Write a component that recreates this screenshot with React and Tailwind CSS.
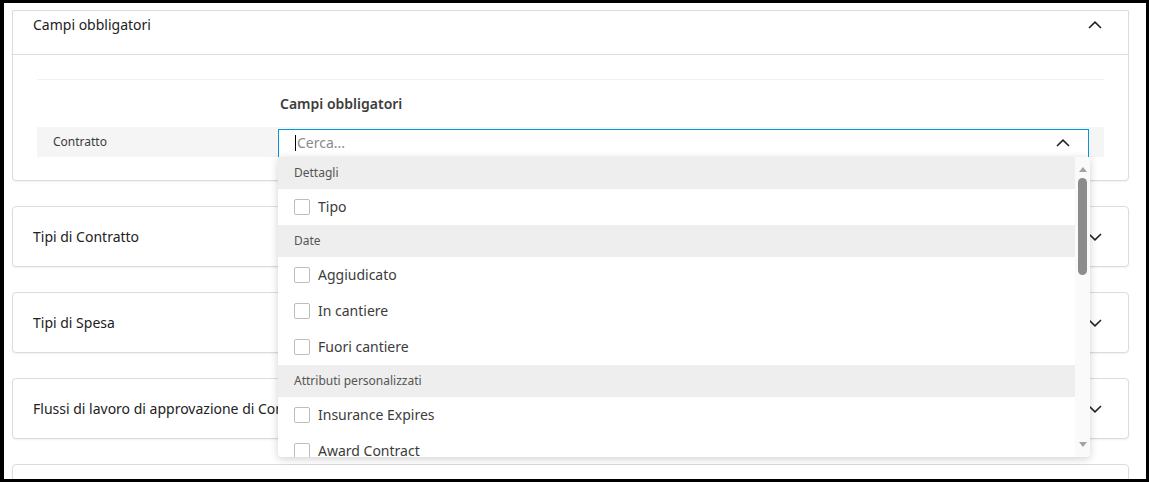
const font = { fontFamily: '"Noto Sans", "Open Sans", sans-serif' };

const ChevronUp = () => (
  <svg width="14" height="8" viewBox="0 0 14 8" fill="none">
    <polyline points="1,7 7,1.2 13,7" stroke="#222" strokeWidth="1.6" />
  </svg>
);

const ChevronDown = () => (
  <svg width="14" height="8" viewBox="0 0 14 8" fill="none">
    <polyline points="1,1 7,6.8 13,1" stroke="#222" strokeWidth="1.6" />
  </svg>
);

const GroupHeader = ({ label }) => (
  <div className="h-8 shrink-0 flex items-center pl-4 bg-[#eeeeee] text-xs text-[#555]">{label}</div>
);

const Option = ({ label }) => (
  <div className="h-9 shrink-0 flex items-center pl-4 gap-2 text-sm text-[#3c3c3c]">
    <span className="w-4 h-4 border border-[#bdbdbd] rounded-[2px] bg-white" />
    {label}
  </div>
);

const Card = ({ title }) => (
  <div className="h-[61px] shrink-0 border border-[#dcdcdc] rounded shadow-[0_1px_2px_rgba(0,0,0,0.06)] flex items-center justify-between pl-5 pr-[26px] text-sm text-[#222] bg-white">
    <span className="whitespace-nowrap">{title}</span>
    <ChevronDown />
  </div>
);

export default function App() {
  return (
    <div
      className="w-[1149px] h-[482px] overflow-hidden bg-white border-black border-t-[3px] border-r-[3px] border-b-[3px] border-l-4"
      style={font}
    >
      <div className="pl-2 pr-[17px] pt-[7px] flex flex-col gap-[25px]">
        <div className="shrink-0 border border-[#dcdcdc] rounded-b shadow-[0_1px_2px_rgba(0,0,0,0.06)] bg-white">
          <div className="h-[44px] flex items-center justify-between pl-5 pr-[26px] border-b border-[#dcdcdc] text-sm text-[#222]">
            <span className="-mt-[16px]">Campi obbligatori</span>
            <span className="-mt-[16px]">
              <ChevronUp />
            </span>
          </div>
          <div className="p-6 pb-[23px]">
            <div className="border-t border-[#f0f0f0] h-[48px] flex items-center pl-[243px] text-sm font-semibold text-[#3c3c3c]">
              Campi obbligatori
            </div>
            <div className="h-[30px] bg-[#f5f5f5] flex pr-[15px]">
              <div className="w-[241px] shrink-0 pl-4 flex items-center text-xs text-[#3c3c3c]">Contratto</div>
              <div className="relative flex-1 pt-[2px]">
                <div className="h-[30px] border border-b-0 border-[#0696d7] bg-white flex items-center justify-between pl-4 pr-[18px] pb-[3px]">
                  <span className="flex items-center text-sm text-[#8a8a8a]">
                    <span className="w-px h-4 bg-black mr-px" />
                    Cerca...
                  </span>
                  <ChevronUp />
                </div>
                <div className="absolute left-0 top-[30px] w-[812px] h-[300px] bg-white rounded-b shadow-[0_2px_8px_rgba(0,0,0,0.18)] flex overflow-hidden z-10">
                  <div className="flex-1 flex flex-col">
                    <GroupHeader label="Dettagli" />
                    <Option label="Tipo" />
                    <GroupHeader label="Date" />
                    <Option label="Aggiudicato" />
                    <Option label="In cantiere" />
                    <Option label="Fuori cantiere" />
                    <GroupHeader label="Attributi personalizzati" />
                    <Option label="Insurance Expires" />
                    <Option label="Award Contract" />
                  </div>
                  <div className="w-[15px] shrink-0 bg-[#fafafa] flex flex-col items-center pt-[10px] pb-[10px]">
                    <svg width="8" height="5" viewBox="0 0 8 5">
                      <polygon points="0,5 4,0 8,5" fill="#a3a3a3" />
                    </svg>
                    <div className="mt-[6px] w-[9px] h-[97px] rounded-full bg-[#8c8c8c]" />
                    <div className="flex-1" />
                    <svg width="8" height="5" viewBox="0 0 8 5">
                      <polygon points="0,0 8,0 4,5" fill="#a3a3a3" />
                    </svg>
                  </div>
                </div>
              </div>
            </div>
          </div>
        </div>
        <Card title="Tipi di Contratto" />
        <Card title="Tipi di Spesa" />
        <Card title="Flussi di lavoro di approvazione di Contratto" />
        <Card title="" />
      </div>
    </div>
  );
}
